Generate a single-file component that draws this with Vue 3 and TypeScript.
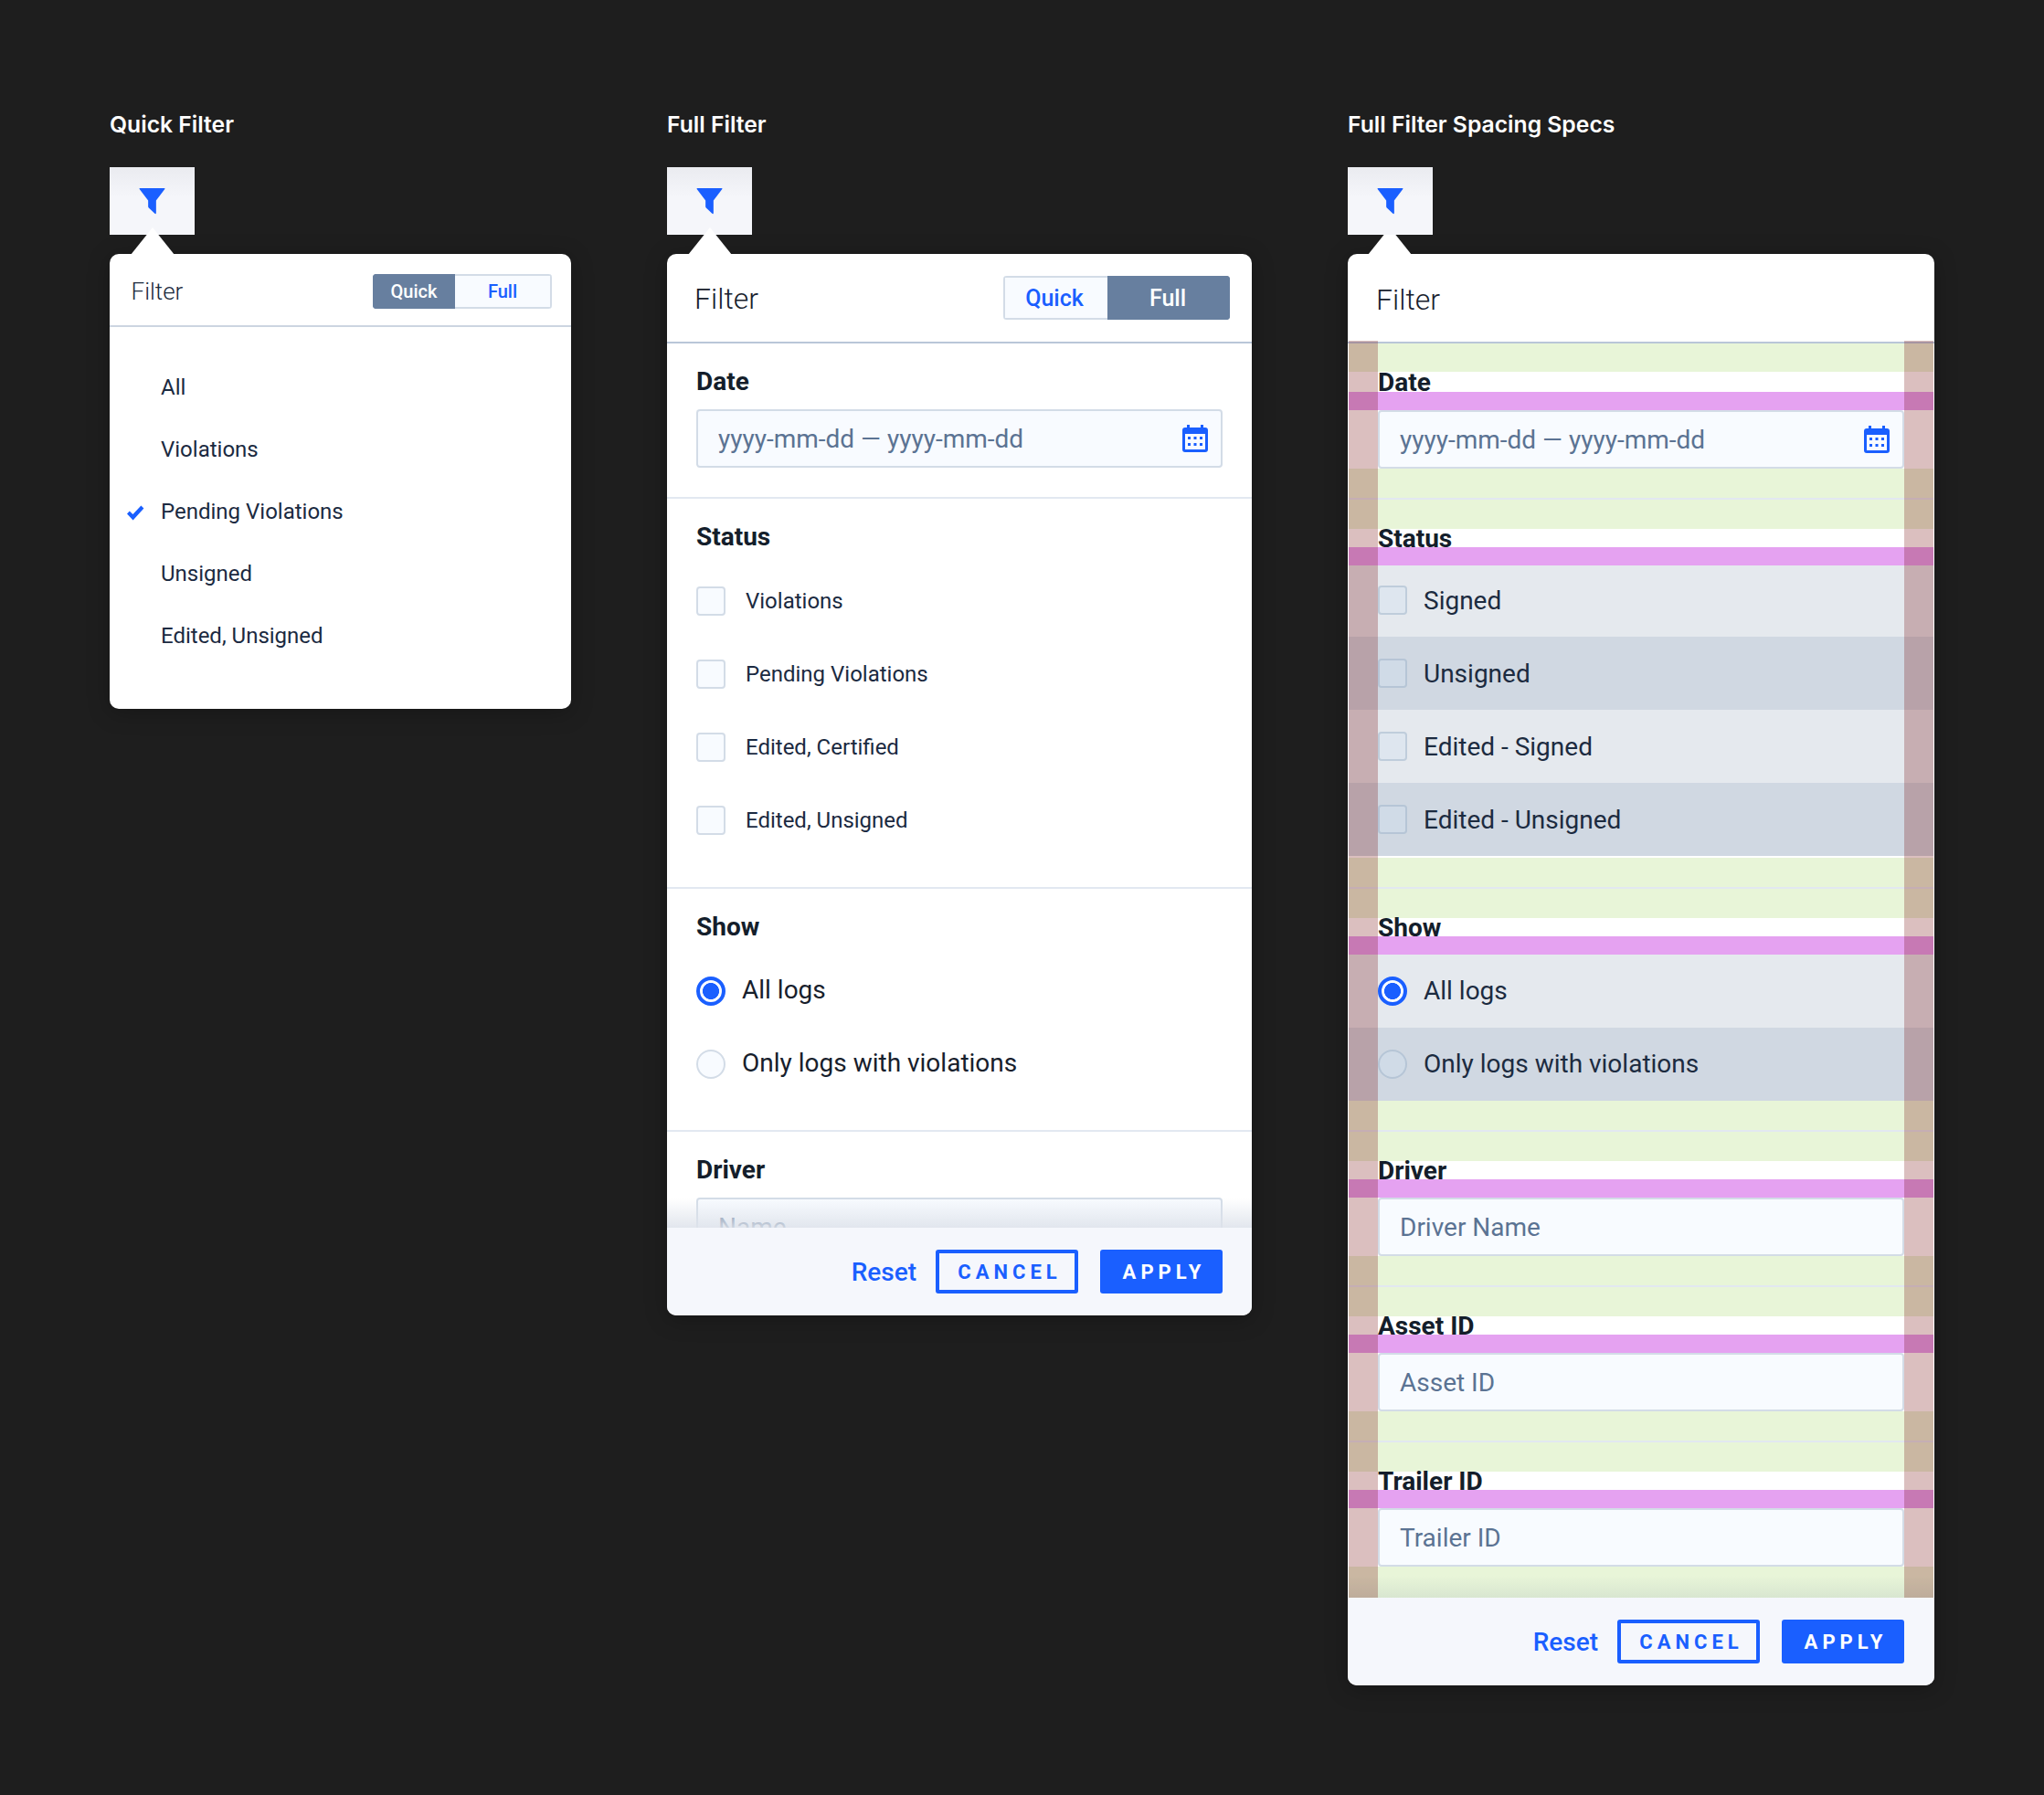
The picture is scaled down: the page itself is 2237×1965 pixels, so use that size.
<template>
  <div class="page">
    <div class="column quick-column">
      <h2 class="heading">Quick Filter</h2>
      <div class="trigger">
        <svg class="funnel" viewBox="0 0 30 30"><path :d="funnelPath" /></svg>
      </div>
      <div class="panel quick-panel">
        <span class="arrow"></span>
        <div class="quick-header">
          <span class="quick-title">Filter</span>
          <div class="toggle small">
            <span class="seg on">Quick</span>
            <span class="seg">Full</span>
          </div>
        </div>
        <div class="quick-list">
          <div v-for="item in quickItems" :key="item" class="quick-row">
            <span class="check-slot">
              <svg v-if="item === 'Pending Violations'" viewBox="0 0 20 17" class="tick">
                <path d="M1 9.5 L3.8 6.6 L7.4 10 L16.4 0.6 L19.4 3.4 L7.6 16.4 Z" />
              </svg>
            </span>
            {{ item }}
          </div>
        </div>
      </div>
    </div>

    <div v-for="panel in fullPanels" :key="panel.title" class="column" :class="panel.spec ? 'spec-column' : 'full-column'">
      <h2 class="heading">{{ panel.title }}</h2>
      <div class="trigger">
        <svg class="funnel" viewBox="0 0 30 30"><path :d="funnelPath" /></svg>
      </div>
      <div class="panel full-panel" :class="{ spec: panel.spec }">
        <span class="arrow"></span>
        <div class="full-header">
          <span class="full-title">Filter</span>
          <div v-if="!panel.spec" class="toggle large">
            <span class="seg">Quick</span>
            <span class="seg on">Full</span>
          </div>
        </div>
        <div class="body">
          <section v-for="sec in panel.sections" :key="sec.label" class="section">
            <div class="pad"></div>
            <div class="label">{{ sec.label }}</div>
            <div class="label-gap"></div>
            <div v-if="sec.kind === 'field'" class="field">
              <span>{{ sec.placeholder }}</span>
              <svg v-if="sec.calendar" class="calendar" viewBox="0 0 28 30">
                <path d="M5 0h3v3h12V0h3v3h2a3 3 0 0 1 3 3v21a3 3 0 0 1-3 3H3a3 3 0 0 1-3-3V6a3 3 0 0 1 3-3h2z" />
                <rect x="3" y="10" width="22" height="17" fill="#f8fbff" />
                <g>
                  <rect x="6" y="13" width="3" height="3" /><rect x="12.5" y="13" width="3" height="3" /><rect x="19" y="13" width="3" height="3" />
                  <rect x="6" y="20" width="3" height="3" /><rect x="12.5" y="20" width="3" height="3" /><rect x="19" y="20" width="3" height="3" />
                </g>
              </svg>
            </div>
            <div v-else class="rows" :class="sec.kind + '-rows'">
              <div v-for="opt in sec.options" :key="opt" class="row">
                <span v-if="sec.kind === 'check'" class="box"></span>
                <span v-else class="radio" :class="{ on: opt === 'All logs' }"></span>
                <span class="row-text">{{ opt }}</span>
              </div>
            </div>
            <div class="pad"></div>
          </section>
          <div class="fade"></div>
        </div>
        <template v-if="panel.spec">
          <div class="side left"></div>
          <div class="side right"></div>
        </template>
        <div class="footer">
          <span class="reset">Reset</span>
          <span class="btn outline">CANCEL</span>
          <span class="btn solid">APPLY</span>
        </div>
      </div>
    </div>
  </div>
</template>

<script setup lang="ts">
interface FilterSection {
  label: string;
  kind: "field" | "check" | "radio";
  placeholder?: string;
  calendar?: boolean;
  options?: string[];
}

interface FullPanel {
  title: string;
  spec: boolean;
  sections: FilterSection[];
}

const funnelPath = "M1.2 0H28.8Q30 0 29.3 1L19.5 14V27.8Q19.5 30 18 28.8L11.4 22.6Q10.5 21.8 10.5 20.6V14L0.7 1Q0 0 1.2 0Z";

const quickItems = ["All", "Violations", "Pending Violations", "Unsigned", "Edited, Unsigned"];

const dateSection: FilterSection = {
  label: "Date",
  kind: "field",
  placeholder: "yyyy-mm-dd — yyyy-mm-dd",
  calendar: true,
};
const showSection: FilterSection = {
  label: "Show",
  kind: "radio",
  options: ["All logs", "Only logs with violations"],
};

const fullPanels: FullPanel[] = [
  {
    title: "Full Filter",
    spec: false,
    sections: [
      dateSection,
      {
        label: "Status",
        kind: "check",
        options: ["Violations", "Pending Violations", "Edited, Certified", "Edited, Unsigned"],
      },
      showSection,
      { label: "Driver", kind: "field", placeholder: "Name" },
    ],
  },
  {
    title: "Full Filter Spacing Specs",
    spec: true,
    sections: [
      dateSection,
      {
        label: "Status",
        kind: "check",
        options: ["Signed", "Unsigned", "Edited - Signed", "Edited - Unsigned"],
      },
      showSection,
      { label: "Driver", kind: "field", placeholder: "Driver Name" },
      { label: "Asset ID", kind: "field", placeholder: "Asset ID" },
      { label: "Trailer ID", kind: "field", placeholder: "Trailer ID" },
    ],
  },
];
</script>

<style>
html,
body {
  background: #1e1e1e;
}
</style>

<style scoped>
.page {
  display: flex;
  align-items: flex-start;
  gap: 105px;
  min-height: 1965px;
  box-sizing: border-box;
  padding: 120px 0 0 120px;
  font-family: Roboto, sans-serif;
  color: #1b2a41;
}

.column {
  display: flex;
  flex-direction: column;
  align-items: flex-start;
}
.quick-column { width: 505px; }
.full-column { width: 640px; }
.spec-column { width: 642px; }

.heading {
  margin: 0 0 31px;
  font-family: Inter, sans-serif;
  font-size: 24.7px;
  font-weight: 600;
  line-height: 32px;
  color: #fff;
  white-space: nowrap;
}

.trigger {
  position: relative;
  display: flex;
  justify-content: center;
  width: 93px;
  height: 74px;
  background: linear-gradient(#eaebf0, #f5f6fa 45%);
}
.spec-column .trigger { z-index: 2; }
.funnel {
  width: 29px;
  height: 29px;
  margin-top: 23px;
  fill: #1a5fff;
}

.panel {
  position: relative;
  width: 100%;
  margin-top: 21px;
  border-radius: 10px;
  background: #fff;
  box-shadow: 0 4px 24px rgba(0, 0, 0, 0.25);
}
.arrow {
  position: absolute;
  top: -29px;
  left: 23px;
  width: 48px;
  height: 30px;
  background: #fff;
  clip-path: polygon(50% 0, 100% 100%, 0 100%);
}
.spec .arrow { left: 22px; }

.quick-panel { height: 498px; }
.quick-header {
  display: flex;
  align-items: center;
  justify-content: space-between;
  box-sizing: border-box;
  height: 80px;
  padding: 3px 21px 0 23.5px;
  border-bottom: 2px solid #ccd5e1;
}
.quick-title {
  font-size: 26px;
  font-weight: 300;
  color: #1b2a3c;
}
.quick-list { padding-top: 32px; }
.quick-row {
  display: flex;
  align-items: center;
  height: 68px;
  padding-left: 18px;
  font-size: 24px;
}
.check-slot {
  display: flex;
  width: 38px;
}
.tick {
  width: 20px;
  height: 17px;
  margin-top: 3px;
  fill: #1a5fff;
}

.toggle {
  display: flex;
  box-sizing: border-box;
  border-radius: 4px;
  overflow: hidden;
}
.seg {
  display: flex;
  align-items: center;
  justify-content: center;
  box-sizing: border-box;
  border: 2px solid #d3dce7;
  background: #f8fbff;
  color: #1a5fff;
  font-weight: 500;
}
.seg.on {
  border-color: #677f9f;
  background: #677f9f;
  color: #fff;
}
.small { height: 38px; font-size: 20px; }
.small .seg:first-child { width: 90px; }
.small .seg:last-child { width: 106px; border-left: none; }
.large { height: 48px; font-size: 25px; }
.large .seg:first-child { width: 114px; padding-right: 4px; border-right: none; }
.large .seg:last-child { width: 134px; padding-right: 2px; }

.full-panel {
  display: flex;
  flex-direction: column;
  height: 1162px;
}
.full-panel.spec { height: 1567px; }
.full-header {
  display: flex;
  flex: none;
  align-items: center;
  justify-content: space-between;
  box-sizing: border-box;
  height: 98px;
  padding: 0 24px 0 30px;
  border-bottom: 2px solid #b9c6d8;
}
.spec .full-header { padding-left: 31px; }
.full-title {
  position: relative;
  top: 1px;
  font-size: 32px;
  font-weight: 300;
  color: #17202c;
}
.spec .full-title { top: 2px; }

.body {
  position: relative;
  flex: 1;
  min-height: 0;
  overflow: hidden;
}
.spec .body {
  border-left: 1px solid #fff;
  border-right: 1px solid #fff;
}
.section { border-bottom: 2px solid #e2e8f1; }
.section:last-of-type { border-bottom: none; }
.section:last-of-type .pad:last-child { height: 34px; }
.pad { height: 32px; }
.label,
.field,
.rows .row { margin: 0 32px; }
.label {
  height: 20px;
  font-size: 28px;
  font-weight: 700;
  line-height: 20px;
  color: #141e2b;
}
.label-gap { position: relative; height: 20px; }
.field {
  display: flex;
  align-items: center;
  justify-content: space-between;
  box-sizing: border-box;
  height: 64px;
  padding: 0 14px 0 22px;
  border: 2px solid #d3dce7;
  border-radius: 4px;
  background: #f8fbff;
  font-size: 28px;
  color: #5b7393;
}
.calendar {
  width: 28px;
  height: 30px;
  fill: #1a5fff;
}
.rows { margin-bottom: 1px; }
.radio-rows { margin-bottom: 0; }
.row {
  display: flex;
  align-items: center;
  height: 80px;
}
.check-rows .row { gap: 22px; font-size: 24px; }
.radio-rows .row { gap: 18px; font-size: 28px; color: #17202c; }
.radio-rows .row-text { margin-top: -3px; }
.box {
  box-sizing: border-box;
  width: 32px;
  height: 32px;
  border: 2px solid #d3dce7;
  border-radius: 4px;
  background: #f8fbff;
}
.radio {
  flex: none;
  box-sizing: border-box;
  width: 32px;
  height: 32px;
  border: 2px solid #d3dce7;
  border-radius: 50%;
  background: #f8fbff;
}
.radio.on {
  border: 4px solid #1a5fff;
  background: radial-gradient(circle, #1a5fff 0 8.7px, #f8fbff 9.3px);
}
.fade {
  position: absolute;
  right: 0;
  bottom: 0;
  left: 0;
  height: 32px;
  background: linear-gradient(rgba(246, 248, 252, 0), rgba(222, 227, 235, 0.88));
}

.footer {
  display: flex;
  flex: none;
  align-items: center;
  justify-content: flex-end;
  gap: 24px;
  height: 96px;
  padding: 0 32px 0 0;
  border-radius: 0 0 10px 10px;
  background: #f5f7fc;
}
.spec .footer { padding-right: 33px; }
.reset {
  margin-right: -3px;
  font-size: 28px;
  font-weight: 500;
  color: #1a5fff;
}
.btn {
  display: flex;
  align-items: center;
  justify-content: center;
  box-sizing: border-box;
  height: 48px;
  padding-left: 6px;
  border-radius: 3px;
  font-size: 22px;
  font-weight: 700;
  letter-spacing: 5px;
}
.outline {
  width: 156px;
  border: 4px solid #1a5fff;
  color: #1a5fff;
}
.solid {
  width: 134px;
  background: #1a5fff;
  color: #fff;
}

/* spacing spec overlays */
.spec .pad { background: #e8f5d8; }
.spec .label-gap { background: #e5a2f1; }
.spec .label { line-height: 22px; }
.spec .section:first-child .pad:first-child { height: 31px; }
.spec .section:first-child .label { height: 22px; line-height: 24px; }
.spec .check-rows { margin: -2px 0 0; padding-bottom: 2px; }
.spec .rows .row { margin: 0; padding: 0 32px; gap: 18px; font-size: 28px; color: #1c2b40; }
.spec .rows .row:nth-child(odd) { background: #e5e9ee; }
.spec .rows .row:nth-child(even) { background: #d0d8e2; }
.spec .check-rows .row-text { margin-top: 1px; }
.spec .radio-rows .row-text { margin-top: -1px; }
.spec .box,
.spec .radio:not(.on) {
  border-color: rgba(120, 145, 175, 0.3);
  background: rgba(210, 225, 240, 0.35);
}
.spec .fade {
  height: 24px;
  background: linear-gradient(rgba(120, 140, 160, 0), rgba(120, 140, 160, 0.14));
}
.side {
  position: absolute;
  top: 95px;
  bottom: 96px;
  width: 32px;
  background: rgba(111, 0, 0, 0.25);
}
.side.left { left: 1px; }
.side.right { right: 1px; }
</style>
